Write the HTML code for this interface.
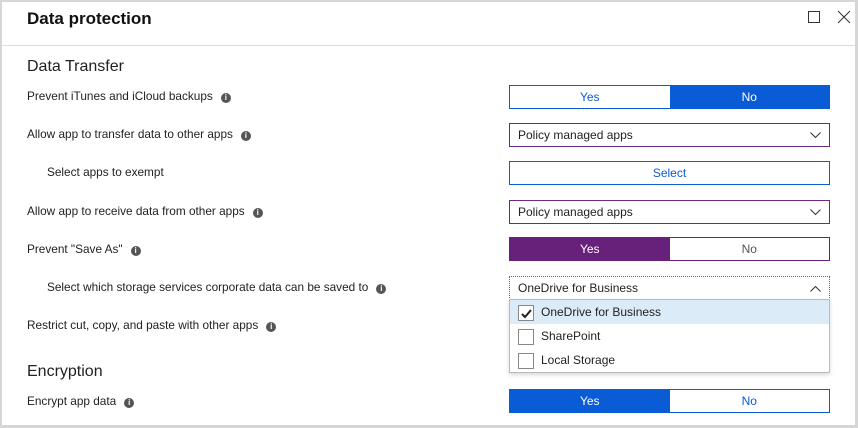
<!DOCTYPE html>
<html><head><style>
*{margin:0;padding:0;box-sizing:border-box}
body{width:858px;height:428px;background:#d6d6d6;font-family:"Liberation Sans",sans-serif;position:relative;overflow:hidden}
#p{position:absolute;left:2px;top:2px;width:853px;height:423px;background:#fff}
.a{position:absolute;white-space:nowrap}
.lbl{font-size:11.8px;color:#222}
.i{display:inline-block;width:10px;height:10px;border-radius:50%;background:#555;color:#fff;font-size:8px;line-height:10px;text-align:center;font-weight:bold;margin-left:8px;vertical-align:0}
.tg{position:absolute;left:507px;width:321px;height:24px;display:flex;font-size:12px}
.tg div{flex:1;text-align:center;line-height:22px}
.dd{position:absolute;left:507px;width:321px;height:24px;border:1px solid #6b2a7f;font-size:12px;line-height:22px;padding-left:8px;color:#222}
.cb{display:inline-block;width:16px;height:16px;border:1px solid #888;vertical-align:middle;margin-right:7px;background:#fff}
</style></head><body>
<div id="p">
<div class="a" style="left:25px;top:7px;font-size:17px;font-weight:bold;color:#111">Data protection</div>
<div class="a" style="left:806px;top:9px;width:12px;height:12px;border:1px solid #333"></div>
<svg class="a" style="left:835px;top:8px" width="14" height="14"><path d="M1 1L13 13M13 1L1 13" stroke="#333" stroke-width="1"/></svg>
<div class="a" style="left:0;top:43px;width:853px;height:1px;background:#ddd"></div>
<div class="a" style="left:25px;top:56px;font-size:16px;color:#222">Data Transfer</div>
<div class="a lbl" style="left:25px;top:87px">Prevent iTunes and iCloud backups<span class="i">i</span></div>
<div class="a lbl" style="left:25px;top:125px">Allow app to transfer data to other apps<span class="i">i</span></div>
<div class="a lbl" style="left:45px;top:163px">Select apps to exempt</div>
<div class="a lbl" style="left:25px;top:202px">Allow app to receive data from other apps<span class="i">i</span></div>
<div class="a lbl" style="left:25px;top:240px">Prevent "Save As"<span class="i">i</span></div>
<div class="a lbl" style="left:45px;top:278px">Select which storage services corporate data can be saved to<span class="i">i</span></div>
<div class="a lbl" style="left:25px;top:316px">Restrict cut, copy, and paste with other apps<span class="i">i</span></div>
<div class="a" style="left:25px;top:361px;font-size:16px;color:#222">Encryption</div>
<div class="a lbl" style="left:25px;top:392px">Encrypt app data<span class="i">i</span></div>

<div class="tg" style="top:83px;border:1px solid #0a5bd6"><div style="color:#0a5bd6;background:#fff">Yes</div><div style="background:#0a5bd6;color:#fff">No</div></div>
<div class="dd" style="top:121px">Policy managed apps<svg style="position:absolute;right:8px;top:8px" width="11" height="7"><path d="M0.5 0.5L5.5 5.5L10.5 0.5" stroke="#333" fill="none"/></svg></div>
<div class="a" style="left:507px;top:159px;width:321px;height:24px;border:1px solid #0a5bd6;text-align:center;line-height:22px;font-size:12px;color:#0a5bd6">Select</div>
<div class="dd" style="top:198px">Policy managed apps<svg style="position:absolute;right:8px;top:8px" width="11" height="7"><path d="M0.5 0.5L5.5 5.5L10.5 0.5" stroke="#333" fill="none"/></svg></div>
<div class="tg" style="top:235px;border:1px solid #68217a"><div style="background:#68217a;color:#fff">Yes</div><div style="color:#555;background:#fff">No</div></div>
<div class="dd" style="top:274px;border:1px dotted #2a7ab0">OneDrive for Business<svg style="position:absolute;right:8px;top:8px" width="11" height="7"><path d="M0.5 6.5L5.5 1.5L10.5 6.5" stroke="#333" fill="none"/></svg></div>
<div class="a" style="left:507px;top:297px;width:321px;height:74px;border:1px solid #bbb;background:#fff;box-shadow:0 2px 4px rgba(0,0,0,.15);font-size:12px;color:#222">
 <div style="height:24px;background:#dcebf8;padding:3px 8px;line-height:18px"><span class="cb" style="position:relative"><svg style="position:absolute;left:1px;top:1px" width="13" height="13"><path d="M2 7L5 10L11 3" stroke="#222" stroke-width="2" fill="none"/></svg></span>OneDrive for Business</div>
 <div style="height:24px;padding:3px 8px;line-height:18px"><span class="cb"></span>SharePoint</div>
 <div style="height:24px;padding:3px 8px;line-height:18px"><span class="cb"></span>Local Storage</div>
</div>
<div class="tg" style="top:387px;border:1px solid #0a5bd6"><div style="background:#0a5bd6;color:#fff">Yes</div><div style="color:#0a5bd6;background:#fff">No</div></div>
</div>
</body></html>
